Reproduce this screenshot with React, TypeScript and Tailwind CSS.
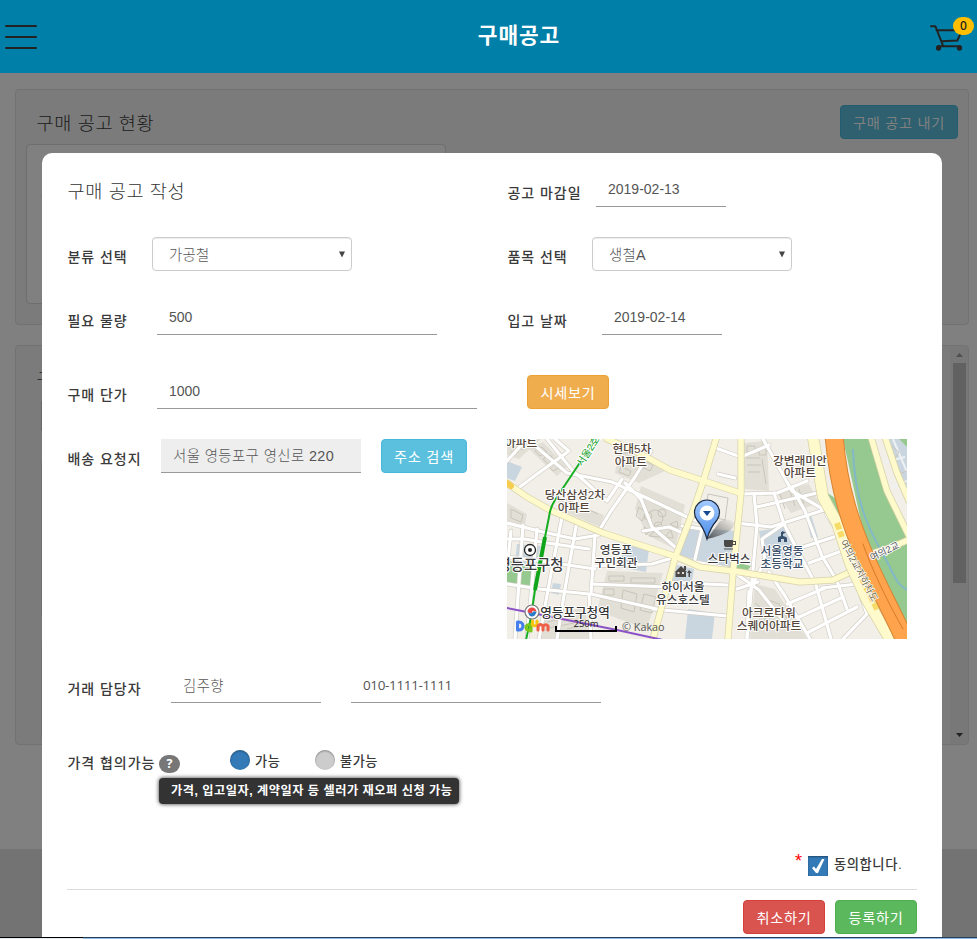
import type { ReactNode } from "react";

function Label({ children, className = "" }: { children: ReactNode; className?: string }) {
  return (
    <span className={`shrink-0 whitespace-nowrap pt-[10px] pl-[0.5px] text-[14px] font-medium leading-5 tracking-[0.95px] text-[#3a3a3a] ${className}`}>
      {children}
    </span>
  );
}

function Field({ value, className = "pt-[6px] text-[14px]" }: { value: string; className?: string }) {
  return (
    <div className={`h-[34px] shrink-0 whitespace-nowrap border-b border-[#999] px-3 leading-5 text-[#555] ${className}`}>
      {value}
    </div>
  );
}

function SelectBox({ value }: { value: string }) {
  return (
    <div className="flex h-[34px] w-[200px] shrink-0 items-center justify-between rounded border border-[#ccc] bg-white pl-4 pr-[6px] pt-px text-[14.4px] tracking-[0.3px] text-[#555] shadow-[inset_0_1px_1px_rgba(0,0,0,0.075)]">
      <span className="pt-[2px] font-light">{value}</span>
      <svg width="6" height="7" viewBox="0 0 6 7" className="mb-px">
        <path d="M0 0.5H6L3 6.5Z" fill="#444" />
      </svg>
    </div>
  );
}

function Button({ children, className = "" }: { children: ReactNode; className?: string }) {
  return (
    <button className={`h-[34px] shrink-0 whitespace-nowrap rounded border pt-px text-[14.2px] leading-5 tracking-[0.75px] text-white ${className}`}>
      {children}
    </button>
  );
}

const minorRoads = [
  "M0 22L20 0", "M20 0L60 34L105 43L142 60L180 78L196 84", "M48 0L62 12L30 35L10 50",
  "M0 84L36 93L68 100L92 96", "M0 100H18L40 104L82 110", "M0 118L34 122L88 130", "M0 145L32 150L82 155L84 200",
  "M4 92L0 130", "M16 86L8 200", "M30 90L20 200", "M55 78L43 140L32 200", "M70 82L58 150L50 200", "M88 96L84 155L150 170",
  "M93 90L104 72L128 38L144 12", "M118 44L134 60L145 88L168 108", "M40 0L66 32L100 62L115 40",
  "M84 145L160 148", "M88 127L145 125L165 119", "M146 170L220 177", "M158 143L220 146", "M168 119L225 130",
  "M136 92L162 88L178 95", "M175 87L195 90L188 120", "M206 8L234 18L262 6", "M211 35L228 39", "M234 55L270 54L300 42",
  "M247 55L250 86L246 130L240 200", "M267 54L277 85L293 116L309 146L324 200", "M229 84L264 88L320 70",
  "M285 49L298 72L315 117L330 142L340 170", "M256 0L285 52L319 72", "M277 85L255 100L258 122L244 149",
  "M293 109L327 98", "M302 124L340 110", "M280 165L318 149", "M290 179L336 158", "M300 194L350 168",
  "M262 133L278 157L303 200", "M228 134L252 151L278 184", "M315 149L350 145L360 175L336 200",
  "M230 150L251 143", "M242 152L240 198", "M319 75L340 106L355 152", "M250 68L310 54",
];

const yellowRoads = [
  "M0 44L20 58L43 71L96 94L170 118L193 128L233 133L293 143L326 141L346 132",
  "M209 0L196 43L185 75L168 119L146 200", "M234 0V54L226 134L221 200",
  "M100 0L132 14L163 31L200 43L233 54",
];

function MapText({ x, y, children, size = 11.7, fill = "#54463a" }: { x: number; y: number; children: ReactNode; size?: number; fill?: string }) {
  return (
    <text x={x} y={y} fontSize={size} fill={fill} stroke="#fff" strokeWidth="2" strokeLinejoin="round" paintOrder="stroke" textAnchor="middle" fontWeight="500">
      {children}
    </text>
  );
}

function MapView() {
  return (
    <svg width="400" height="200" viewBox="0 0 400 200" className="block shrink-0 overflow-hidden">
      <rect width="400" height="200" fill="#f2efe9" />
      {/* blocks */}
      <g fill="#e2dfd6">
        <path d="M0 0H34L12 20L0 16ZM22 10L36 3L60 28L50 37ZM112 10L140 14L158 32L132 44L108 34ZM134 47L178 66L168 110L140 96L128 70ZM100 132L156 134L140 190L90 172ZM236 4L260 2L262 52L238 50ZM268 52L302 45L312 64L284 74ZM248 145L268 150L300 200H243ZM52 58L97 76L93 88L51 70ZM0 64L20 75L17 90L0 85ZM34 178L78 168L82 200H30Z" />
      </g>
      <g fill="#cad6df">
        <path d="M0 22L15 28L8 42L0 39ZM10 105L34 107L28 127L8 123ZM118 106L142 110L139 133L112 128ZM175 88L229 92L225 130L171 116ZM170 126L187 130L184 149L164 145ZM181 170L208 174L205 200H178ZM252 92L277 88L291 110L286 129L256 122ZM299 77L304 76L311 98L304 99ZM376 0H400V62L386 30ZM46 144L54 145L52 156L44 154Z" />
      </g>
      <g fill="#96c98f">
        <path d="M0 121L28 130L26 150L0 143ZM318 52L332 62L350 100L336 95ZM336 0H362L378 54L400 90V196L366 128L353 78ZM231 124L244 127L240 132L228 131ZM392 0H400V8Z" />
      </g>
      <path d="M346 10C348 68 364 93 378 119S388 142 400 151" fill="none" stroke="#83b8c8" strokeWidth="2" />
      <path d="M386 0L400 33M378 23L398 18M385 48L400 42" fill="none" stroke="#eef1f3" strokeWidth="2" />
      {/* building outlines */}
      <g fill="none" stroke="#c9c5bb" strokeWidth="1">
        <path d="M28 12l7-4 5 5-7 4zM36 20l7-4 5 5-7 4zM42 28l7-4 4 4-7 4zM6 5h11v5H6zM4 13h8M58 60l16 7M60 66l12 5M80 70l11 5M4 70l12 6-2 7-10-4zM116 14h10v5h-10zM134 20l12 6-3 6-10-5zM114 28l10 4-2 5-10-4zM102 137h15v5h-15zM124 139h24v5h-24zM116 151l14 4-3 18-13-4zM137 155l12 3-4 16-12-3zM97 150h10v6H97zM240 7h8v6h-8zM252 9h7v7h-7zM239 19h14M240 26h14M241 33h12M255 20l4 25M273 55l5 15M283 52l5 15M292 50l5 15M40 183l14-3M42 189l25-5M60 190l14-3M201 55l20 4-3 22-20-5zM259 160l13 5 12 22M248 164l10 8v12M382 5l10 8-5 8M392 35l8-3" />
        <circle cx="148" cy="79" r="8" /><circle cx="141" cy="77" r="4" /><circle cx="155" cy="74" r="4" /><circle cx="151" cy="87" r="4" />
        <path d="M132 68l7 6-4 8-6-5zM142 97l7-6 4 7zM158 98l6-7 2 8zM163 85l7-3 1 7zM137 88l6 4-4 4z" />
      </g>
      <g fill="none" strokeLinejoin="round" strokeLinecap="round">
        {minorRoads.map((d) => <path key={d} d={d} stroke="#d2cec6" strokeWidth="4.5" />)}
        {minorRoads.map((d) => <path key={d} d={d} stroke="#fff" strokeWidth="3.2" />)}
        {yellowRoads.map((d) => <path key={d} d={d} stroke="#d8d2a8" strokeWidth="7" />)}
        {yellowRoads.map((d) => <path key={d} d={d} stroke="#fefacb" strokeWidth="5.6" />)}
        <path d="M306 -2L316 58L330 84L343 124L360 161L384 202" stroke="#d8d2a8" strokeWidth="12" />
        <path d="M306 -2L316 58L330 84L343 124L360 161L384 202" stroke="#fefacb" strokeWidth="10.5" />
        <path d="M364 -2L380 52L402 97M378 -2L390 34L402 62M360 116L385 108L401 101" stroke="#d8d2a8" strokeWidth="7" />
        <path d="M364 -2L380 52L402 97M378 -2L390 34L402 62M360 116L385 108L401 101" stroke="#fefacb" strokeWidth="5.5" />
        <path d="M330 84L335 98M355 140L371 172" stroke="#f7dc6a" strokeWidth="6" strokeDasharray="7 2" strokeLinecap="butt" />
        <path d="M327 -5C331 50 345 88 359 120S385 172 402 210" stroke="#d68432" strokeWidth="19" />
        <path d="M327 -5C331 50 345 88 359 120S385 172 402 210" stroke="#ffa34d" strokeWidth="17" />
        <path d="M356 105C364 128 379 160 396 190" stroke="#d67b28" strokeWidth="1" />
        <path d="M0 44L4 47" stroke="#f7cd50" strokeWidth="6" />
        <path d="M0 169L25 174L110 191L156 201" stroke="#8b52c7" strokeWidth="2" />
        <path d="M90 -1L70 28L48 61Q43 69 42 78L38 98L28 151L24 178L19 201" stroke="#18ae22" strokeWidth="2" />
        <path d="M38 98L28 151" stroke="#10a51b" strokeWidth="4" strokeLinecap="butt" />
      </g>
      <MapText x={14} y={8}>아파트</MapText>
      <MapText x={125} y={14}>현대5차</MapText>
      <MapText x={124} y={27}>아파트</MapText>
      <MapText x={68} y={60}>당산삼성2차</MapText>
      <MapText x={67} y={73}>아파트</MapText>
      <MapText x={293} y={26}>강변래미안</MapText>
      <MapText x={293} y={38}>아파트</MapText>
      <MapText x={109} y={115} fill="#3c3c3c">영등포</MapText>
      <MapText x={109} y={128} fill="#3c3c3c">구민회관</MapText>
      <MapText x={23.5} y={131} size={14.4} fill="#3c3c3c">영등포구청</MapText>
      <MapText x={176} y={152} fill="#3c3c3c">하이서울</MapText>
      <MapText x={176} y={165} fill="#3c3c3c">유스호스텔</MapText>
      <MapText x={222} y={124} fill="#3c3c3c">스타벅스</MapText>
      <MapText x={275} y={116} fill="#3a506b">서울영동</MapText>
      <MapText x={275} y={129} fill="#3a506b">초등학교</MapText>
      <MapText x={262} y={178}>아크로타워</MapText>
      <MapText x={262} y={191}>스퀘어아파트</MapText>
      <MapText x={68} y={178} size={12.6} fill="#333">영등포구청역</MapText>
      <g transform="translate(75 28) rotate(-57)"><text fontSize="10" fill="#0a9a18" stroke="#fff" strokeWidth="2" paintOrder="stroke">서울2호선</text></g>
      <g transform="translate(333 103) rotate(62)"><text fontSize="9.8" fill="#77704e" stroke="#fff" strokeWidth="1.4" paintOrder="stroke">여의2교지하차도</text></g>
      <g transform="translate(365 122) rotate(-26)"><text fontSize="9.4" fill="#4a4f55" stroke="#fff" strokeWidth="1.8" paintOrder="stroke">여의2교</text></g>
      {/* place symbols */}
      <circle cx="23" cy="111" r="5.5" fill="#fff" stroke="#222" strokeWidth="1.3" /><circle cx="23" cy="111" r="2" fill="#222" />
      <circle cx="25" cy="173" r="7" fill="#fff" stroke="#777" strokeWidth="1.2" />
      <path d="M20.5 173a4.5 4.5 0 0 1 9 0q-4.5-3-4.5 1-3 1-4.5-1" fill="#e94745" /><path d="M21 173q1 4.5 4 4.5t4.5-4.5q-3-2-4.5 1-3 1-4-1" fill="#287bc7" />
      <path d="M168 133L174 127L180 133H179V138H168.5V133ZM177 127H179V131H177ZM182 131L185 134H183V138H181.5V134H180Z" fill="#4a4744" />
      <path d="M170.5 133H172.500V135H170.500ZM175 133H177V135H175Z" fill="#e2dfd6" />
      <path d="M217 101H226V102H229V106H226L225 108H218L217 106ZM226 103V105H228V103ZM217 109.500H226V110.500H217Z" fill="#4b4947" fillRule="evenodd" />
      <path d="M271 103V98L274 97V93H275V92L279 93.500L276 95V97L279 98L280 99V103H277V100H274V103Z" fill="#37516e" />
      {/* pin */}
      <defs>
        <linearGradient id="shade" x1="0" y1="1" x2="1" y2="0"><stop stopColor="#222" stopOpacity=".75" /><stop offset="1" stopColor="#555" stopOpacity="0" /></linearGradient>
        <linearGradient id="pin" x1="0" y1="0" x2="0" y2="1"><stop stopColor="#a4caff" /><stop offset="1" stopColor="#4b8de8" /></linearGradient>
      </defs>
      <path d="M200 100L213 82Q225 78 227 85Q227 94 200 100Z" fill="url(#shade)" />
      <path d="M200 100Q197 89 190 81A12.5 12.5 0 1 1 210 81Q203 89 200 100Z" fill="url(#pin)" stroke="#1d2a40" strokeWidth="1.2" />
      <circle cx="200" cy="74" r="7.4" fill="#fff" /><path d="M196 72H204L200 77Z" fill="#174a91" />
      {/* attribution and scale */}
      <g fill="none" strokeWidth="3.1" strokeLinecap="round" strokeLinejoin="round">
        <path d="M10.5 183V191H12A4 4 0 0 0 12 183Z" stroke="#477fed" />
        <path d="M24 187A2.7 2.7 0 1 0 24 190V187V192" stroke="#7cc71c" />
        <path d="M25.500 182V185A2.3 2.3 0 0 0 30 185V182" stroke="#f8c410" />
        <path d="M31 191V187Q33.5 184.5 36 187V191M36 187Q39 184.5 41 187V191" stroke="#ef6048" />
      </g>
      <path d="M49 187V192H109V187" fill="none" stroke="#000" strokeWidth="2" />
      <text x="79" y="188" textAnchor="middle" fontSize="9.5" fill="#222" fontFamily="Open Sans">250m</text>
      <text x="115" y="192" fontSize="10.8" fill="#555" fontFamily="Open Sans">© Kakao</text>
    </svg>
  );
}

function Header() {
  return (
    <header className="flex h-[73px] items-start justify-between bg-[#0080a8]">
      <div className="ml-[5px] mt-[25px] flex w-12 flex-col gap-[9px]">
        <i className="block h-[2px] w-8 rounded bg-[#222]" />
        <i className="block h-[2px] w-8 rounded bg-[#222]" />
        <i className="block h-[2px] w-8 rounded bg-[#222]" />
      </div>
      <h1 className="ml-[56px] mt-[21px] text-[21.4px] font-bold leading-[30px] tracking-[0.9px] text-white">구매공고</h1>
      <div className="relative mt-[24px] h-8 w-12">
        <svg width="36" height="28" viewBox="0 0 36 28" fill="none" stroke="#222" strokeWidth="2" strokeLinecap="round" strokeLinejoin="round">
          <path d="M2 2.200H6.300L14.200 22M7.500 6.300H33L28.300 16.500L12.800 17.300M9 22.300H31" />
          <circle cx="9.500" cy="24" r="2.700" fill="#222" stroke="none" /><circle cx="30.500" cy="24" r="2.700" fill="#222" stroke="none" />
        </svg>
        <span className="absolute -top-[7px] left-[24px] flex h-[18px] w-[21px] items-center justify-center rounded-full bg-[#ffbf00] font-['Noto_Sans'] text-[12px] font-medium text-[#222]">0</span>
      </div>
    </header>
  );
}

function BackgroundPage() {
  return (
    <div className="flex h-[864px] flex-col bg-[#808080]">
      <section className="mx-[15px] mt-4 flex h-[236px] w-[954px] shrink-0 flex-col rounded border border-[#727272] bg-[#7b7b7b]">
        <div className="flex h-[54px] items-start justify-between pl-[20.5px] pr-[10px] pt-[15px]">
          <h2 className="pt-[6px] text-[18.6px] font-light leading-[26px] tracking-[0.6px] text-[#1a1a1a]">구매 공고 현황</h2>
          <Button className="w-[118px] border-[#235e70] bg-[#2e6070] text-[#808080]!">구매 공고 내기</Button>
        </div>
        <div className="ml-[10px] h-[160px] w-[420px] rounded border border-[#6e6e6e] bg-[#808080]">
          <div className="ml-[14px] mt-[51px] h-px w-[390px] bg-[#6e6e6e]" />
        </div>
      </section>
      <section className="mx-[15px] mt-5 flex h-[400px] w-[954px] shrink-0 justify-between overflow-hidden rounded border border-[#727272] bg-[#7b7b7b]">
        <div className="pl-[20.5px] pt-[21px]">
          <h2 className="text-[18.6px] font-light leading-[26px] text-[#1a1a1a]">구</h2>
          <div className="ml-[4.5px] mt-2 h-[30px] w-40 border-l border-[#686868]" />
          <div className="ml-[4.5px] mt-[30px] h-[155px] w-40 border-l border-[#727272]" />
          <div className="ml-[4.5px] mt-[25px] h-[98px] w-40 border-l border-[#727272]" />
        </div>
        <div className="flex w-[18px] flex-col items-center bg-[#787878]">
          <svg width="7" height="4" viewBox="0 0 7 4" className="mt-[7px] shrink-0"><path d="M0 4L3.500 0L7 4Z" fill="#505050" /></svg>
          <div className="mt-[6px] h-[220px] w-[13px] shrink-0 bg-[#616161]" />
          <svg width="7" height="4" viewBox="0 0 7 4" className="mb-[7px] mt-auto shrink-0"><path d="M0 0L3.500 4L7 0Z" fill="#222" /></svg>
        </div>
      </section>
      <footer className="mt-auto h-[88px] bg-[#737373]" />
    </div>
  );
}

function PurchaseForm() {
  return (
    <div className="absolute left-[42px] top-[153px] flex h-[784px] w-[900px] flex-col rounded-t-[10px] bg-white px-[25px] pt-5">
      <div className="flex h-16">
        <h2 className="w-[440px] pl-[0.5px] pt-[6px] text-[18.6px] font-light leading-[26px] tracking-[0.6px] text-[#333]">구매 공고 작성</h2>
        <Label className="w-[89px]">공고 마감일</Label>
        <Field value="2019-02-13" className="w-[130px] pt-[6px] text-[14px]" />
      </div>
      <div className="flex h-16">
        <Label className="w-[85px]">분류 선택</Label>
        <div className="w-[355px]"><SelectBox value="가공철" /></div>
        <Label className="w-[85px]">품목 선택</Label>
        <SelectBox value="생철A" />
      </div>
      <div className="flex h-[74px]">
        <Label className="w-[90px]">필요 물량</Label>
        <Field value="500" className="mr-[70px] w-[280px] pt-[6px] text-[14px]" />
        <Label className="w-[95px]">입고 날짜</Label>
        <Field value="2019-02-14" className="w-[120px] pt-[6px] text-[14px]" />
      </div>
      <div className="flex h-16">
        <Label className="w-[90px]">구매 단가</Label>
        <Field value="1000" className="mr-[50px] w-[320px] pt-[6px] text-[14px]" />
        <Button className="w-[82px] border-[#eea236] bg-[#f0ad4e]">시세보기</Button>
      </div>
      <div className="flex h-[230px]">
        <Label className="w-[94px]">배송 요청지</Label>
        <Field value="서울 영등포구 영신로 220" className="mr-5 w-[200px] bg-[#eee] pt-[7px] text-[14.4px] font-light tracking-[0.4px]" />
        <Button className="mr-10 w-[86px] border-[#46b8da] bg-[#5bc0de]">주소 검색</Button>
        <MapView />
      </div>
      <div className="flex h-[74px]">
        <Label className="w-[104px]">거래 담당자</Label>
        <Field value="김주향" className="mr-[30px] w-[150px] pt-[7px] text-[14.4px] font-light tracking-[0.4px]" />
        <Field value="010-1111-1111" className="w-[250px] pt-[6px] font-['Open_Sans'] text-[13.5px] tracking-[-0.36px]" />
      </div>
      <div className="relative flex h-[113px]">
        <Label className="w-[92px]">가격 협의가능</Label>
        <span className="mt-3 flex h-[18px] w-[21px] items-center justify-center rounded-full bg-[#777] font-['Open_Sans'] text-[12.5px] font-bold text-white">?</span>
        <span className="ml-[50px] mt-[7px] size-5 rounded-full bg-[#337ab7] shadow-[inset_0_1px_2px_rgba(0,0,0,0.35)]" />
        <span className="ml-[5px] w-[60px] pt-[9px] text-[13.2px] font-medium leading-5 tracking-[0.5px] text-[#3a3a3a]">가능</span>
        <span className="mt-[7px] size-5 rounded-full bg-[#ccc] shadow-[inset_0_1px_2px_rgba(0,0,0,0.35)]" />
        <span className="ml-[5px] pt-[9px] text-[13.2px] font-medium leading-5 tracking-[0.5px] text-[#3a3a3a]">불가능</span>
        <div className="absolute left-[92px] top-[35px] flex h-[26px] w-[300px] items-center whitespace-nowrap rounded bg-[#333] pl-3 text-[12.2px] font-bold tracking-[0.52px] text-white shadow-[0_0_4px_#333]">
          가격, 입고일자, 계약일자 등 셀러가 재오퍼 신청 가능
        </div>
      </div>
      <div className="flex h-[34px] shrink-0 border-b border-[#ddd] pl-[728px]">
        <span className="-mt-[5px] w-[13px] text-[18px] leading-5 text-[#f00]">*</span>
        <span className="flex size-5 items-center justify-center bg-[#337ab7] shadow-[inset_0_1px_2px_rgba(0,0,0,0.4)]">
          <svg width="14" height="16" viewBox="0 0 14 16"><path d="M1 10L3 8.500L5 11L11 1H13.500L7 15H5Z" fill="#fff" /></svg>
        </span>
        <span className="-mt-px ml-[6px] whitespace-nowrap text-[13.3px] font-medium leading-5 tracking-[0.55px] text-[#3a3a3a]">동의합니다.</span>
      </div>
      <div className="mt-[10px] flex shrink-0 justify-end gap-[10px]">
        <Button className="w-[82px] border-[#d43f3a] bg-[#d9534f]">취소하기</Button>
        <Button className="w-[82px] border-[#4cae4c] bg-[#5cb85c]">등록하기</Button>
      </div>
    </div>
  );
}

export default function App() {
  return (
    <div className="relative flex h-[939px] w-[977px] flex-col overflow-hidden bg-white font-['Liberation_Sans','Noto_Sans_CJK_KR',sans-serif]">
      <Header />
      <BackgroundPage />
      <div className="flex h-px"><i className="w-[83px] bg-black" /><i className="flex-1 bg-[#23405c]" /></div>
      <div className="flex h-px"><i className="w-[83px] bg-[#e4edf4]" /><i className="flex-1 bg-[#8fbce0]" /></div>
      <PurchaseForm />
    </div>
  );
}
